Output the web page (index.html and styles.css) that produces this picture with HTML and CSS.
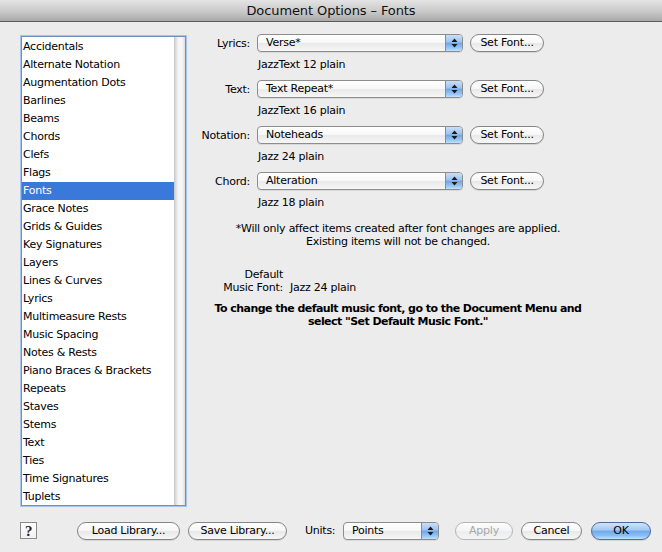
FILE: index.html
```html
<!DOCTYPE html>
<html>
<head>
<meta charset="utf-8">
<title>Document Options – Fonts</title>
<link rel="stylesheet" href="styles.css">
</head>
<body>
<div class="window">
  <div class="titlebar">Document Options – Fonts</div>
  <div class="main">
    <div class="list">
      <ul class="items">
        <li>Accidentals</li>
        <li>Alternate Notation</li>
        <li>Augmentation Dots</li>
        <li>Barlines</li>
        <li>Beams</li>
        <li>Chords</li>
        <li>Clefs</li>
        <li>Flags</li>
        <li class="selected">Fonts</li>
        <li>Grace Notes</li>
        <li>Grids &amp; Guides</li>
        <li>Key Signatures</li>
        <li>Layers</li>
        <li>Lines &amp; Curves</li>
        <li>Lyrics</li>
        <li>Multimeasure Rests</li>
        <li>Music Spacing</li>
        <li>Notes &amp; Rests</li>
        <li>Piano Braces &amp; Brackets</li>
        <li>Repeats</li>
        <li>Staves</li>
        <li>Stems</li>
        <li>Text</li>
        <li>Ties</li>
        <li>Time Signatures</li>
        <li>Tuplets</li>
      </ul>
      <div class="scrolltrack"></div>
    </div>

    <div class="panel">
      <div class="fontrow">
        <div class="ctl">
          <span class="lbl">Lyrics:</span>
          <div class="popup wide"><span class="ptext">Verse*</span><span class="arrows"><svg width="7" height="10" viewBox="0 0 7 10"><path d="M3.5 0.5 L6.5 4 L0.5 4 Z M0.5 6 L6.5 6 L3.5 9.5 Z" fill="#1b1b1b"/></svg></span></div>
          <button class="btn setfont">Set Font...</button>
        </div>
        <div class="info">JazzText 12 plain</div>
      </div>
      <div class="fontrow">
        <div class="ctl">
          <span class="lbl">Text:</span>
          <div class="popup wide"><span class="ptext">Text Repeat*</span><span class="arrows"><svg width="7" height="10" viewBox="0 0 7 10"><path d="M3.5 0.5 L6.5 4 L0.5 4 Z M0.5 6 L6.5 6 L3.5 9.5 Z" fill="#1b1b1b"/></svg></span></div>
          <button class="btn setfont">Set Font...</button>
        </div>
        <div class="info clipped">JazzText 16 plain</div>
      </div>
      <div class="fontrow">
        <div class="ctl">
          <span class="lbl">Notation:</span>
          <div class="popup wide"><span class="ptext">Noteheads</span><span class="arrows"><svg width="7" height="10" viewBox="0 0 7 10"><path d="M3.5 0.5 L6.5 4 L0.5 4 Z M0.5 6 L6.5 6 L3.5 9.5 Z" fill="#1b1b1b"/></svg></span></div>
          <button class="btn setfont">Set Font...</button>
        </div>
        <div class="info">Jazz 24 plain</div>
      </div>
      <div class="fontrow">
        <div class="ctl">
          <span class="lbl">Chord:</span>
          <div class="popup wide"><span class="ptext">Alteration</span><span class="arrows"><svg width="7" height="10" viewBox="0 0 7 10"><path d="M3.5 0.5 L6.5 4 L0.5 4 Z M0.5 6 L6.5 6 L3.5 9.5 Z" fill="#1b1b1b"/></svg></span></div>
          <button class="btn setfont">Set Font...</button>
        </div>
        <div class="info">Jazz 18 plain</div>
      </div>

      <div class="note">
        <p>*Will only affect items created after font changes are applied.</p>
        <p>Existing items will not be changed.</p>
      </div>

      <div class="default">
        <span class="dlabel">Default</span>
        <span></span>
        <span class="dlabel">Music Font:</span>
        <span class="dvalue">Jazz 24 plain</span>
      </div>

      <div class="boldnote">
        <p>To change the default music font, go to the Document Menu and</p>
        <p>select "Set Default Music Font."</p>
      </div>
    </div>
  </div>

  <div class="bottombar">
    <div class="help">?</div>
    <button class="btn load">Load Library...</button>
    <button class="btn save">Save Library...</button>
    <span class="units">Units:</span>
    <div class="popup points"><span class="ptext">Points</span><span class="arrows"><svg width="7" height="10" viewBox="0 0 7 10"><path d="M3.5 0.5 L6.5 4 L0.5 4 Z M0.5 6 L6.5 6 L3.5 9.5 Z" fill="#1b1b1b"/></svg></span></div>
    <button class="btn apply" disabled>Apply</button>
    <button class="btn cancel">Cancel</button>
    <button class="btn ok">OK</button>
  </div>
</div>
</body>
</html>
```

FILE: styles.css
```css
html, body {
  margin: 0;
  padding: 0;
  background: #ececec;
}

.window {
  width: 662px;
  height: 552px;
  background: #ececec;
  font-family: "DejaVu Sans", "Liberation Sans", sans-serif;
  font-size: 11px;
  letter-spacing: -0.25px;
  color: #000;
  display: flex;
  flex-direction: column;
  overflow: hidden;
}

.titlebar {
  height: 22px;
  box-sizing: border-box;
  border-bottom: 1px solid #5c5c5c;
  background: linear-gradient(#e4e4e4, #c9c9c9 55%, #a9a9a9);
  text-align: center;
  font-size: 13px;
  line-height: 21px;
  letter-spacing: -0.1px;
  color: #111;
}

.main {
  height: 485px;
  box-sizing: border-box;
  padding-top: 12px;
  display: flex;
  align-items: flex-start;
}

.list {
  margin-left: 21px;
  margin-top: 2px;
  width: 165px;
  height: 470px;
  box-sizing: border-box;
  border: 1px solid #7290bd;
  box-shadow: 0 0 0 1px #a7c5ec;
  background: #fff;
  display: flex;
}

.items {
  list-style: none;
  margin: 0;
  padding: 1px 0 0 0;
  flex: 1;
}

.items li {
  height: 18px;
  line-height: 18px;
  padding-left: 1px;
  white-space: nowrap;
}

.items li.selected {
  background: #3a78da;
  color: #fff;
}

.scrolltrack {
  width: 11px;
  background: linear-gradient(to right, #c6c6c6 0, #dedede 2px, #f3f3f3 4px, #fbf7f7 7px, #f1eeee 9px, #dcdcdc 11px);
}

.panel {
  width: 424px;
  display: flex;
  flex-direction: column;
}

.fontrow {
  margin-bottom: 7px;
}

.ctl {
  display: flex;
  align-items: center;
  height: 18px;
}

.lbl {
  width: 64px;
  text-align: right;
  white-space: nowrap;
}

.popup {
  height: 18px;
  box-sizing: border-box;
  border: 1px solid #8d8d8d;
  border-radius: 4px;
  background: linear-gradient(#ffffff, #f7f7f7 50%, #e9e9e9 51%, #f6f6f6);
  display: flex;
  align-items: stretch;
  overflow: hidden;
  box-shadow: 0 1px 0 rgba(0,0,0,0.08);
}

.popup.wide {
  width: 206px;
  margin-left: 7px;
}

.ptext {
  flex: 1;
  padding-left: 8px;
  line-height: 16px;
  white-space: nowrap;
}

.arrows {
  width: 16px;
  border-left: 1px solid #7a8fb0;
  background: linear-gradient(#c9def7, #9cc3f0 45%, #6ea5e8 50%, #9ccbf7 85%, #c4e2fc);
  display: flex;
  align-items: center;
  justify-content: center;
}

.btn {
  font: inherit;
  letter-spacing: inherit;
  color: #000;
  height: 18px;
  padding: 0;
  box-sizing: border-box;
  border: 1px solid #858585;
  border-radius: 9px;
  background: linear-gradient(#ffffff, #f6f6f6 50%, #e8e8e8 51%, #f7f7f7);
  box-shadow: 0 1px 0 rgba(0,0,0,0.1);
  text-align: center;
  line-height: 16px;
  white-space: nowrap;
}

.setfont {
  margin-left: 7px;
  width: 74px;
}

.info {
  padding-left: 72px;
  margin-top: 5px;
  line-height: 16px;
  height: 16px;
  white-space: nowrap;
}

.info.clipped {
  clip-path: inset(0 0 3px 0);
}

.note {
  margin-top: 4px;
  text-align: center;
}

.note p, .boldnote p {
  margin: 0;
  line-height: 13px;
  white-space: nowrap;
}

.default {
  margin-top: 20px;
  display: grid;
  grid-template-columns: 97px auto;
  column-gap: 7px;
  line-height: 13px;
}

.dlabel {
  text-align: right;
  white-space: nowrap;
}

.dvalue {
  white-space: nowrap;
}

.boldnote {
  margin-top: 8px;
  text-align: center;
  font-weight: bold;
  letter-spacing: -0.55px;
}

.bottombar {
  flex: 1;
  display: flex;
  align-items: center;
  padding-left: 20px;
  padding-top: 2px;
}

.help {
  width: 17px;
  height: 17px;
  box-sizing: border-box;
  border: 1px solid #8a8a8a;
  background: linear-gradient(#ffffff, #f1f1f1);
  font-family: "Liberation Serif", "DejaVu Serif", serif;
  font-weight: bold;
  font-size: 15px;
  line-height: 16px;
  text-align: center;
  color: #222;
}

.load {
  margin-left: 40px;
  width: 103px;
}

.save {
  margin-left: 8px;
  width: 99px;
}

.units {
  margin-left: 18px;
  width: 38px;
  white-space: nowrap;
}

.popup.points {
  width: 96px;
}

.apply {
  margin-left: 16px;
  width: 58px;
  color: #a8a8a8;
  border-color: #b5b5b5;
  background: linear-gradient(#fdfdfd, #f4f4f4 50%, #ececec 51%, #f5f5f5);
  box-shadow: none;
}

.cancel {
  margin-left: 8px;
  width: 61px;
}

.ok {
  margin-left: 9px;
  width: 60px;
  border-color: #4b6c9c;
  background: linear-gradient(#cfe3fa, #a3c8f3 45%, #6ea8ec 50%, #8cc0f6 80%, #c4e2fd);
}
```
